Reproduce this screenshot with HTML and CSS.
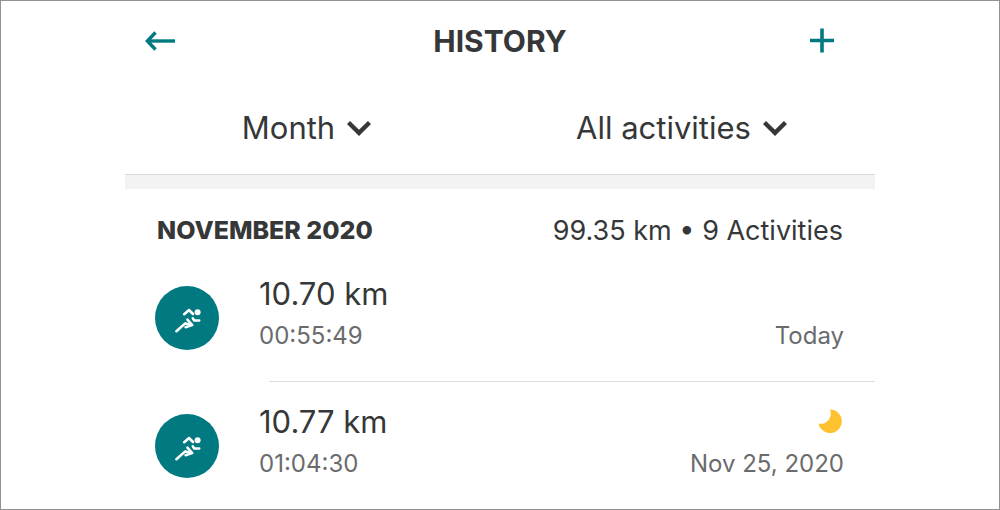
FILE: index.html
```
<!DOCTYPE html>
<html lang="en">
<head>
    <meta charset="UTF-8">
    <meta name="viewport" content="width=device-width, initial-scale=1.0">
    <title>History</title>
    <link rel="stylesheet" href="styles.css">
</head>
<body>
    <!-- Shared icons -->
    <svg class="icon-defs" aria-hidden="true">
        <symbol id="chevron" viewBox="0 0 24 16">
            <path d="M1.5 2.5 L12 12.8 L22.5 2.5" fill="none" stroke="currentColor" stroke-width="4.4"/>
        </symbol>
        <symbol id="runner" viewBox="0 0 64 64">
            <circle cx="42.6" cy="26.3" r="3" fill="#fff"/>
            <g fill="none" stroke="#fff" stroke-width="2.6" stroke-linecap="round" stroke-linejoin="round">
                <path d="M29.2 28.2 L34 24 L38 28"/>
                <path d="M44.2 34.5 H39.2 L37.8 32.3"/>
                <path d="M21.4 45.2 L30.2 37.4 L34 38.2"/>
                <path d="M32.4 33.6 L37.2 39 L30.6 41.2"/>
            </g>
        </symbol>
    </svg>

    <main class="app">
        <header class="top-bar">
            <button type="button" class="icon-btn" aria-label="Back">
                <svg width="32" height="22" viewBox="0 0 32 22" fill="none" stroke="currentColor" stroke-width="3.4">
                    <path d="M30 11 H3"/>
                    <path d="M10.5 2.5 L2.4 11 L10.5 19.5"/>
                </svg>
            </button>
            <h1>HISTORY</h1>
            <button type="button" class="icon-btn add-btn" aria-label="Add activity">
                <svg width="26" height="26" viewBox="0 0 26 26" fill="none" stroke="currentColor" stroke-width="3.6">
                    <path d="M1 12.5 H25 M13 0.5 V24.5"/>
                </svg>
            </button>
        </header>

        <div class="filters">
            <label class="filter">
                <select aria-label="Period">
                    <option>Month</option>
                </select>
                <svg class="chevron"><use href="#chevron"/></svg>
            </label>
            <label class="filter">
                <select aria-label="Activity type">
                    <option>All activities</option>
                </select>
                <svg class="chevron"><use href="#chevron"/></svg>
            </label>
        </div>

        <section class="month">
            <div class="month-header">
                <h2>NOVEMBER 2020</h2>
                <p>99.35 km • 9 Activities</p>
            </div>

            <ul class="activities">
                <li class="activity">
                    <svg class="badge"><use href="#runner"/></svg>
                    <div class="details">
                        <div class="distance">10.70 km</div>
                        <div class="meta">
                            <span>00:55:49</span>
                            <span>Today</span>
                        </div>
                    </div>
                </li>
                <li class="activity">
                    <svg class="badge"><use href="#runner"/></svg>
                    <div class="details">
                        <div class="distance">
                            10.77 km
                            <svg class="moon" viewBox="0 0 24 24">
                                <path d="M12 0.5 A11.8 11.8 0 1 1 0.5 14.5 C7 16.5 15.5 9.5 12 0.5 Z" fill="#fdc22d"/>
                            </svg>
                        </div>
                        <div class="meta">
                            <span>01:04:30</span>
                            <span>Nov 25, 2020</span>
                        </div>
                    </div>
                </li>
            </ul>
        </section>
    </main>
</body>
</html>
```
FILE: styles.css
```
/* General Styles */
* {
    box-sizing: border-box;
}

body {
    margin: 0;
    min-height: 100vh;
    outline: 1px solid #929292;
    outline-offset: -1px;
    background-color: #fff;
    color: #363738;
    font-family: Inter, "Liberation Sans", sans-serif;
}

h1, h2, p, ul {
    margin: 0;
    padding: 0;
}

.icon-defs {
    display: none;
}

.app {
    width: 75%;
    margin: 0 auto;
}

/* Top bar */
.top-bar {
    display: grid;
    grid-template-columns: 1fr auto 1fr;
    align-items: center;
    height: 82px;
    padding: 0 20px;
}

h1 {
    font-size: 30px;
    font-weight: 700;
    line-height: 40px;
}

.icon-btn {
    display: flex;
    justify-self: start;
    padding: 0;
    border: none;
    background: none;
    color: #007a80;
    cursor: pointer;
}

.add-btn {
    justify-self: end;
    margin-right: 20px;
}

/* Filters */
.filters {
    display: grid;
    grid-template-columns: 1fr 1fr;
    height: 92px;
}

.filter {
    display: flex;
    justify-content: center;
    align-items: center;
    gap: 12px;
    padding-right: 12px;
}

.filter select {
    appearance: none;
    field-sizing: content;
    padding: 0;
    border: none;
    background: none;
    color: inherit;
    font-family: inherit;
    font-size: 31px;
    line-height: 40px;
    cursor: pointer;
}

.chevron {
    width: 24px;
    height: 16px;
}

/* Month summary */
.month {
    border-top: 1px solid #d8d8d8;
}

.month::before {
    content: "";
    display: block;
    height: 14px;
    background-color: #f3f3f3;
}

.month-header {
    display: flex;
    justify-content: space-between;
    align-items: center;
    height: 64px;
    padding: 18px 32px 0;
}

h2 {
    font-size: 25px;
    font-weight: 800;
}

.month-header p {
    font-size: 27px;
}

/* Activity list */
.activities {
    list-style: none;
}

.activity {
    display: flex;
    align-items: flex-start;
    gap: 40px;
    height: 128px;
    padding: 18px 31px 0 30px;
}

/* Divider starts under the text and runs to the edge */
.activity + .activity {
    background: linear-gradient(#dcdcdc, #dcdcdc) no-repeat 144px 0 / 100% 1px;
}

.badge {
    flex: none;
    width: 64px;
    height: 64px;
    margin-top: 15px;
    border-radius: 50%;
    background-color: #007a80;
}

.details {
    flex: 1;
}

.distance,
.meta {
    display: flex;
    justify-content: space-between;
    align-items: center;
}

.distance {
    height: 44px;
    font-size: 31px;
}

.meta {
    height: 40px;
    color: #6a6b6c;
    font-size: 24px;
}

.moon {
    width: 24px;
    height: 24px;
    margin-right: 2px;
}
```
